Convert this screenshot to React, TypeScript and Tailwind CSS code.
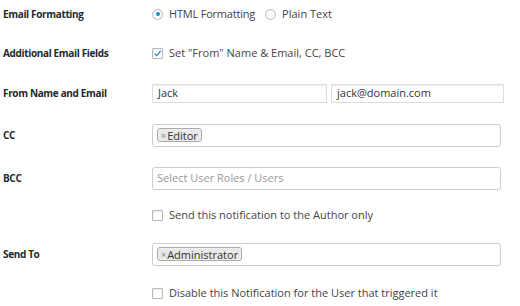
import React from 'react'

const font = { fontFamily: '"Open Sans", "Noto Sans", sans-serif' }

function Radio({ checked }: { checked?: boolean }) {
  return (
    <span className="flex h-[11px] w-[11px] items-center justify-center rounded-full border border-[#b4b9be] bg-white shadow-[inset_0_1px_2px_rgba(0,0,0,0.07)]">
      {checked && <span className="h-[4px] w-[4px] rounded-full bg-[#1e8cbe]" />}
    </span>
  )
}

function Checkbox({ checked }: { checked?: boolean }) {
  return (
    <span className="flex h-[11px] w-[11px] items-center justify-center rounded-[1px] border border-[#b4b9be] bg-white shadow-[inset_0_1px_2px_rgba(0,0,0,0.07)]">
      {checked && (
        <svg viewBox="0 0 12 12" className="h-[11px] w-[11px]">
          <path d="M2.3 6.2 L5 8.8 L10.2 2.4" fill="none" stroke="#1e8cbe" strokeWidth="1.7" />
        </svg>
      )}
    </span>
  )
}

function Tag({ label }: { label: string }) {
  return (
    <span className="flex h-[14px] items-center rounded-[3px] border border-[#aaa] bg-[#e8e8e8] px-[3px] text-[11px] leading-none text-[#333] shadow-[inset_0_0_2px_#fff]">
      <span className="mr-[1px] text-[9px] text-[#888]">×</span>
      {label}
    </span>
  )
}

const labelCls = 'flex items-center text-[10px] font-bold tracking-[-0.35px] text-[#23282d]'

export default function App() {
  return (
    <div className="h-[306px] w-[520px] overflow-hidden bg-white text-[11px] text-[#444]" style={font}>
      <div className="grid grid-cols-[149px_1fr] grid-rows-[28px_50px_30px_54px_32px_42px_36px_42px] pl-[3px] pr-[16px]">
        {/* Email Formatting */}
        <div className={labelCls}>Email Formatting</div>
        <div className="flex items-center">
          <Radio checked />
          <span className="ml-[6px] tracking-[-0.2px]">HTML Formatting</span>
          <span className="ml-[10px]"><Radio /></span>
          <span className="ml-[6px]">Plain Text</span>
        </div>

        {/* Additional Email Fields */}
        <div className={labelCls}>Additional Email Fields</div>
        <div className="flex items-center">
          <Checkbox checked />
          <span className="ml-[6px]">Set "From" Name &amp; Email, CC, BCC</span>
        </div>

        {/* From Name and Email */}
        <div className={labelCls}>From Name and Email</div>
        <div className="flex items-center gap-[4px]">
          <div className="flex h-[19px] w-[175px] items-center border border-[#ddd] pl-[5px] text-[#333] shadow-[inset_0_1px_2px_rgba(0,0,0,0.07)]">
            Jack
          </div>
          <div className="flex h-[19px] w-[173px] items-center border border-[#ddd] pl-[5px] text-[#333] shadow-[inset_0_1px_2px_rgba(0,0,0,0.07)]">
            jack@domain.com
          </div>
        </div>

        {/* CC */}
        <div className={labelCls}>CC</div>
        <div className="flex items-center">
          <div className="flex h-[23px] w-[349px] items-center rounded-[3px] border border-[#ccc] pl-[4px]">
            <Tag label="Editor" />
          </div>
        </div>

        {/* BCC */}
        <div className={labelCls}>BCC</div>
        <div className="flex items-center">
          <div className="flex h-[23px] w-[349px] items-center rounded-[3px] border border-[#ccc] pl-[4px] text-[#999]">
            Select User Roles / Users
          </div>
        </div>

        {/* Author only */}
        <div />
        <div className="flex items-center">
          <Checkbox />
          <span className="ml-[6px]">Send this notification to the Author only</span>
        </div>

        {/* Send To */}
        <div className={labelCls}>Send To</div>
        <div className="flex items-center">
          <div className="flex h-[23px] w-[349px] items-center rounded-[3px] border border-[#ccc] pl-[4px]">
            <Tag label="Administrator" />
          </div>
        </div>

        {/* Disable for triggering user */}
        <div />
        <div className="flex items-center">
          <Checkbox />
          <span className="ml-[6px]">Disable this Notification for the User that triggered it</span>
        </div>
      </div>
    </div>
  )
}
